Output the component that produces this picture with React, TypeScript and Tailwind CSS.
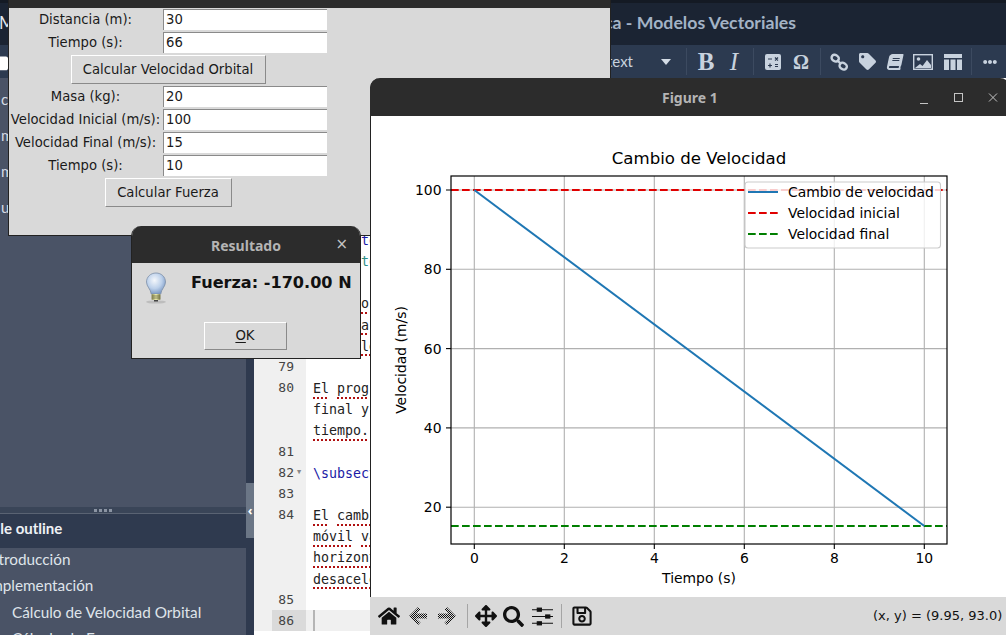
import { FaBook, FaEllipsisH, FaFolder, FaHome, FaArrowsAlt, FaSearch, FaRegSave, FaTag } from "react-icons/fa";

const DEJAVU = "font-['DejaVu_Sans',sans-serif]";
const MONO = "font-['DejaVu_Sans_Mono',monospace]";
const LATO = "font-['Lato',sans-serif]";
const TITLE = "font-['Noto_Sans',sans-serif]";

type EditorRow = { n?: number; text?: string; color?: string; spell?: boolean; fold?: boolean; active?: boolean };

const rows: EditorRow[] = [
  { n: 73, text: "\\item te", color: "text-[#1a1aa6]" },
  { n: 74, text: "      te", color: "text-[#2f8f86]" },
  { n: 75 },
  { n: 76, text: "Cálculo de", spell: true },
  { n: 77, text: "La masa", spell: true },
  { n: 78, text: "desacele", spell: true },
  { n: 79 },
  { n: 80, text: "El prog", spell: true },
  { text: "final y" },
  { text: "tiempo.", spell: true },
  { n: 81 },
  { n: 82, text: "\\subsection", color: "text-[#1a1aa6]", fold: true },
  { n: 83 },
  { n: 84, text: "El cambio", spell: true },
  { text: "móvil va", spell: true },
  { text: "horizontal", spell: true },
  { text: "desacele", spell: true },
  { n: 85 },
  { n: 86, active: true },
];

function Entry({ label, value }: { label: string; value: string }) {
  return (
    <div className="flex h-[21px] items-center">
      <div className="mr-[1px] w-[153px] text-center">{label}</div>
      <div className="flex h-[21px] w-[164px] items-center border-l border-t border-l-[#8a8a8a] border-t-[#8a8a8a] bg-white pl-[2px]">
        {value}
      </div>
    </div>
  );
}

function TkButton({ label, width }: { label: string; width: string }) {
  return (
    <div
      className={`flex h-[29px] items-center justify-center border border-b-[#8a8a8a] border-l-white border-r-[#8a8a8a] border-t-white bg-[#d9d9d9] ${width}`}
    >
      {label}
    </div>
  );
}

function ToolSlot({ children }: { children: React.ReactNode }) {
  return <div className="flex h-full w-[28px] shrink-0 items-center justify-center">{children}</div>;
}

function Sep({ className = "" }: { className?: string }) {
  return <div className={`h-[27px] w-px shrink-0 bg-[#3c4a60] ${className}`} />;
}

// spell-check squiggle goes under each word on its own, not under the spaces
function SpellText({ text }: { text: string }) {
  return (
    <>
      {text.split(" ").map((word, i) => (
        <span key={i}>
          {i > 0 && " "}
          <span className="underline decoration-[#b01010] decoration-dotted decoration-[1.5px] underline-offset-[4px]">{word}</span>
        </span>
      ))}
    </>
  );
}

function Chart() {
  const xs = [0, 2, 4, 6, 8, 10];
  const ys = [100, 80, 60, 40, 20];
  const px = (v: number) => 474.3 + v * 45;
  const py = (v: number) => 190 + (100 - v) * 3.965;
  return (
    <svg viewBox="370 116 636 481" className="h-[481px] w-[636px] shrink-0" fontFamily="'DejaVu Sans', sans-serif">
      {xs.map((v) => (
        <g key={v}>
          <line x1={px(v)} x2={px(v)} y1={176} y2={544} stroke="#b0b0b0" strokeWidth="1.1" />
          <line x1={px(v)} x2={px(v)} y1={544} y2={549} stroke="#000" strokeWidth="1.1" />
          <text x={px(v)} y={563} textAnchor="middle" fontSize="13.9" fill="#000">
            {v}
          </text>
        </g>
      ))}
      {ys.map((v) => (
        <g key={v}>
          <line x1={451} x2={947} y1={py(v)} y2={py(v)} stroke="#b0b0b0" strokeWidth="1.1" />
          <line x1={446} x2={451} y1={py(v)} y2={py(v)} stroke="#000" strokeWidth="1.1" />
          <text x={441.5} y={py(v) + 5} textAnchor="end" fontSize="13.9" fill="#000">
            {v}
          </text>
        </g>
      ))}
      <line x1={451} x2={947} y1={190} y2={190} stroke="#e00000" strokeWidth="2" strokeDasharray="7.7 3.3" />
      <line x1={451} x2={947} y1={526} y2={526} stroke="#007f00" strokeWidth="2" strokeDasharray="7.7 3.3" />
      <line x1={474.3} y1={190} x2={924.3} y2={526} stroke="#1f77b4" strokeWidth="2" />
      <rect x={451} y={176} width={496} height={368} fill="none" stroke="#000" strokeWidth="1.2" />
      <rect x={745} y={182} width={195.5} height={66} rx={3} fill="#fff" fillOpacity="0.8" stroke="#ccc" strokeWidth="1.1" />
      <line x1={748} x2={778} y1={192} y2={192} stroke="#1f77b4" strokeWidth="2" />
      <line x1={748} x2={778} y1={213} y2={213} stroke="#e00000" strokeWidth="2" strokeDasharray="7.7 3.3" />
      <line x1={748} x2={778} y1={234} y2={234} stroke="#007f00" strokeWidth="2" strokeDasharray="7.7 3.3" />
      <text x={788} y={197} fontSize="13.9" fill="#000">Cambio de velocidad</text>
      <text x={788} y={218} fontSize="13.9" fill="#000">Velocidad inicial</text>
      <text x={788} y={239} fontSize="13.9" fill="#000">Velocidad final</text>
      <text x={699} y={164} textAnchor="middle" fontSize="16.6" fill="#000">Cambio de Velocidad</text>
      <text x={699} y={583} textAnchor="middle" fontSize="13.9" fill="#000">Tiempo (s)</text>
      <text x={0} y={0} textAnchor="middle" fontSize="13.9" fill="#000" transform="translate(406 360) rotate(-90)">
        Velocidad (m/s)
      </text>
    </svg>
  );
}

function DitherArrow({ flip }: { flip?: boolean }) {
  return (
    <svg viewBox="0 0 24 24" className={`h-[24px] w-[24px] ${flip ? "-scale-x-100" : ""}`}>
      <defs>
        <pattern id={flip ? "ditherR" : "ditherL"} width="2" height="2" patternUnits="userSpaceOnUse">
          <rect width="1" height="1" fill="#111" />
          <rect x="1" y="1" width="1" height="1" fill="#111" />
        </pattern>
      </defs>
      <path
        d="M3 12 12 3l2.500 2.500L10 9.500h11v5H10l4.500 4L12 21z"
        fill={`url(#${flip ? "ditherR" : "ditherL"})`}
      />
    </svg>
  );
}

export default function App() {
  return (
    <div className="relative h-[635px] w-[1006px] overflow-hidden bg-white">
      {/* Overleaf behind the windows */}
      <div className={`flex h-[45px] items-center border-t-[3px] border-t-[#141a24] bg-[#1b2433] pb-[2px] ${LATO}`}>
        <span className="-ml-[1px] w-[36px] shrink-0 overflow-hidden text-[17px] text-[#e4e8ee]">Menu</span>
        <div className="w-[761px] shrink-0 whitespace-nowrap text-right text-[17.700px] font-bold text-[#a3b3c6]">
          Física - Modelos Vectoriales
        </div>
      </div>
      <div className={`flex h-[33px] items-center bg-[#2c3a50] text-[#c8d2de] ${LATO}`}>
        <FaFolder className="-ml-[14px] mr-[-8px] h-[22px] w-[22px] shrink-0 text-white" />
        <div className="w-[633px] shrink-0 text-right text-[15px]">Normal text</div>
        <svg viewBox="0 0 10 6" className="ml-[28px] mr-[15px] h-[6px] w-[10px] shrink-0 fill-[#d4dce6]">
          <path d="M0 0h10L5 6z" />
        </svg>
        <Sep />
        <div className="w-[5px] shrink-0" />
        <ToolSlot>
          <span className="font-['Liberation_Serif',serif] text-[25px] font-bold">B</span>
        </ToolSlot>
        <ToolSlot>
          <span className="font-['Liberation_Serif',serif] text-[25px] italic">I</span>
        </ToolSlot>
        <Sep className="ml-[5px] mr-[5px]" />
        <ToolSlot>
          <svg viewBox="0 0 16 16" className="h-[16px] w-[16px]">
            <rect width="16" height="16" rx="2" fill="#c8d2de" />
            <path d="M3 5h4M10 3.500l3 3M13 3.500l-3 3M3 11.500h4M5 9.500v4M10 10.500h3M10 12.500h3" stroke="#2c3a50" strokeWidth="1.2" />
          </svg>
        </ToolSlot>
        <ToolSlot>
          <span className="font-['Liberation_Serif',serif] text-[20px] font-bold">Ω</span>
        </ToolSlot>
        <Sep className="ml-[5px] mr-[4px]" />
        <ToolSlot>
          <svg viewBox="0 0 18 18" className="h-[18px] w-[18px] fill-none stroke-[#c8d2de]" strokeWidth="2.4">
            <rect x="1.500" y="2" width="7.500" height="6" rx="3" transform="rotate(35 5 5)" />
            <rect x="9.500" y="10" width="7.500" height="6" rx="3" transform="rotate(35 13 13)" />
            <path d="M7 7l4 4" />
          </svg>
        </ToolSlot>
        <ToolSlot>
          <FaTag className="text-[17px]" />
        </ToolSlot>
        <ToolSlot>
          <FaBook className="-skew-x-12 text-[16px]" />
        </ToolSlot>
        <ToolSlot>
          <svg viewBox="0 0 20 16" className="h-[16px] w-[20px]">
            <rect x="0.700" y="0.700" width="18.600" height="14.600" fill="none" stroke="#c8d2de" strokeWidth="1.4" />
            <circle cx="5.500" cy="5" r="1.800" fill="#c8d2de" />
            <path d="M2 14l5-4 2.500 2 4.500-6 4 5v3z" fill="#c8d2de" />
          </svg>
        </ToolSlot>
        <div className="ml-[2px]" />
        <ToolSlot>
          <svg viewBox="0 0 18 16" className="h-[16px] w-[18px] fill-[#c8d2de]">
            <path d="M0 0h18v4H0zM0 5.500h5V16H0zM6.500 5.500h5V16h-5zM13 5.500h5V16h-5z" />
          </svg>
        </ToolSlot>
        <Sep className="ml-[4px] mr-[4px]" />
        <ToolSlot>
          <FaEllipsisH className="text-[14px]" />
        </ToolSlot>
      </div>

      <div className="flex h-[557px] overflow-hidden">
        {/* File tree and outline */}
        <aside className={`flex w-[246px] shrink-0 flex-col overflow-hidden bg-[#4a5366] ${LATO}`}>
          <div className="flex h-[429px] shrink-0 flex-col pl-[1px] pt-[3px] text-[15px] text-[#d5dbe4]">
            {["codigo.py", "main.tex", "modelos.tex", "ui.py"].map((f) => (
              <div key={f} className="flex h-[36px] items-center">
                {f}
              </div>
            ))}
          </div>
          <div className="flex h-[7px] shrink-0 items-center justify-center gap-[2px] border-b border-[#5a6373] bg-[#3a4558] pr-[41px]">
            {[0, 1, 2, 3].map((i) => (
              <span key={i} className="h-[3px] w-[3px] bg-[#8b94a3]" />
            ))}
          </div>
          <div className="-ml-[12px] flex h-[34px] shrink-0 items-center bg-[#2f3a4f] pb-[6px] text-[15px] font-bold text-[#eef1f5]">
            File outline
          </div>
          <div className="-mt-[2px] flex flex-col text-[15.300px] text-[#dfe4ea]">
            <div className="-ml-[14px] flex h-[26.400px] shrink-0 items-center">Introducción</div>
            <div className="-ml-[14px] flex h-[26.400px] shrink-0 items-center">Implementación</div>
            <div className="ml-[12px] flex h-[26.400px] shrink-0 items-center">Cálculo de Velocidad Orbital</div>
            <div className="ml-[12px] flex h-[26.400px] shrink-0 items-center">Cálculo de Fuerza</div>
          </div>
        </aside>

        <div className="flex w-[8px] shrink-0 flex-col bg-[#2f3a4f] pt-[405px]">
          <div className="flex h-[55px] items-center justify-center bg-[#6b7686] text-[13px] font-bold leading-none text-white">
            ‹
          </div>
        </div>

        {/* Editor */}
        <div className={`flex-1 bg-white pt-[151.400px] text-[13.300px] text-[#222] ${MONO}`}>
          {rows.map((r, i) => (
            <div key={i} className={`flex h-[21.170px] items-center ${r.active ? "bg-[#f0f0f0]" : ""}`}>
              <div className="flex h-full w-[52px] shrink-0 bg-[#f0f0f0]">
                <div className={`ml-[18px] flex h-full w-[34px] items-center text-[13px] text-[#444] ${r.active ? "bg-[#dadada]" : ""}`}>
                  <span className="w-[22px] text-right">{r.n ?? ""}</span>
                  {r.fold && <span className="ml-[3px] text-[7px] text-[#888]">▼</span>}
                </div>
              </div>
              {r.active && <div className="ml-[7px] h-full w-[2px] bg-[#b5b5b5]" />}
              {r.text && (
                <span className={`ml-[7px] mt-[2px] whitespace-pre ${r.color ?? ""}`}>
                  {r.spell ? <SpellText text={r.text} /> : r.text}
                </span>
              )}
            </div>
          ))}
        </div>
      </div>

      {/* Tk calculator window */}
      <div
        className={`absolute left-[8px] top-[-30px] flex h-[266px] w-[603px] flex-col border border-[#222] bg-[#d9d9d9] text-[13.200px] text-[#1a1a1a] ${DEJAVU}`}
      >
        <div className="h-[37px] shrink-0 bg-[#2c2c2c]" />
        <div className="flex w-[318px] flex-col items-center gap-[2px] pt-[1px]">
          <Entry label="Distancia (m):" value="30" />
          <Entry label="Tiempo (s):" value="66" />
          <TkButton label="Calcular Velocidad Orbital" width="w-[195px]" />
          <Entry label="Masa (kg):" value="20" />
          <Entry label="Velocidad Inicial (m/s):" value="100" />
          <Entry label="Velocidad Final (m/s):" value="15" />
          <Entry label="Tiempo (s):" value="10" />
          <TkButton label="Calcular Fuerza" width="w-[127px]" />
        </div>
      </div>

      {/* Result dialog */}
      <div className={`absolute left-[131px] top-[226px] flex h-[133px] w-[230px] flex-col overflow-hidden rounded-t-[10px] border border-t-0 border-[#222] bg-[#d9d9d9] ${DEJAVU}`}>
        <div className="relative flex h-[37px] shrink-0 items-center justify-center bg-[#2c2c2c] pt-[2px]">
          <span className={`text-[14px] font-bold text-[#b4b4b4] ${TITLE}`}>Resultado</span>
          <span className="absolute right-[12px] top-[9px] text-[15px] leading-[18px] text-[#c4c4c4]">×</span>
        </div>
        <div className="flex h-[59px] shrink-0">
          <svg viewBox="0 0 24 32" className="ml-[12px] mt-[9px] h-[32px] w-[24px] shrink-0">
            <defs>
              <radialGradient id="bulb" cx="0.42" cy="0.35" r="0.65">
                <stop offset="0" stopColor="#f4f7fb" />
                <stop offset="0.6" stopColor="#bcd0ea" />
                <stop offset="1" stopColor="#7f9cc6" />
              </radialGradient>
              <linearGradient id="base" x1="0" x2="1" y1="0" y2="0">
                <stop offset="0" stopColor="#8a8a55" />
                <stop offset="0.5" stopColor="#f0f0b0" />
                <stop offset="1" stopColor="#7c7c4c" />
              </linearGradient>
            </defs>
            <ellipse cx="12" cy="30" rx="10" ry="1.600" fill="#bdbdbd" />
            <path
              d="M12 1C6.500 1 2.500 5 2.500 10c0 4.500 4.200 7 4.700 12h9.600c.5-5 4.700-7.500 4.700-12C21.500 5 17.500 1 12 1z"
              fill="url(#bulb)"
              stroke="#7d8fa8"
              strokeWidth="0.8"
            />
            <rect x="7.500" y="22" width="9" height="6" rx="1" fill="url(#base)" />
            <path d="M8 24h8M8 26h8" stroke="#5c5c38" strokeWidth="0.7" />
            <rect x="10" y="28" width="4" height="1.500" fill="#444" />
          </svg>
          <div className="ml-[23px] whitespace-nowrap pt-[10px] text-[16.100px] font-bold leading-[20px] text-[#111]">
            Fuerza: -170.00 N
          </div>
        </div>
        <div className="flex justify-center pr-[2px]">
          <div className="flex h-[28px] w-[83px] items-center justify-center border border-b-[#8a8a8a] border-l-white border-r-[#8a8a8a] border-t-white text-[13.300px] text-[#1a1a1a]">
            <span className="underline underline-offset-2">O</span>K
          </div>
        </div>
      </div>

      {/* Matplotlib figure */}
      <div className="absolute left-[370px] top-[78px] flex h-[560px] w-[640px] flex-col overflow-hidden rounded-t-[10px] bg-white shadow-[inset_1px_0_0_#222]">
        <div className={`relative flex h-[38px] shrink-0 items-center bg-[#2c2c2c] pt-[1px] ${TITLE}`}>
          <span className="ml-[292px] text-[14px] font-bold text-[#b4b4b4]">Figure 1</span>
          <svg viewBox="0 0 90 14" className="absolute left-[549px] top-[13px] h-[14px] w-[90px] fill-none stroke-[#c4c4c4]">
            <path d="M1 12.500h8" />
            <rect x="35.500" y="2.500" width="8" height="8" />
            <path d="M70 2.500l8 8M78 2.500l-8 8" />
          </svg>
        </div>
        <Chart />
        <div className={`flex h-[38px] shrink-0 items-center bg-[#d9d9d9] pl-[1px] text-[#111] ${DEJAVU}`}>
          <div className="flex w-[5px] shrink-0" />
          <FaHome className="mx-[2px] h-[22px] w-[22px] shrink-0 text-[#111]" />
          <div className="w-[4px] shrink-0" />
          <DitherArrow />
          <div className="w-[5px] shrink-0" />
          <DitherArrow flip />
          <div className="ml-[8px] mr-[7px] h-[24px] w-px shrink-0 bg-[#a5a5a5]" />
          <FaArrowsAlt className="h-[22px] w-[22px] shrink-0" />
          <div className="w-[6px] shrink-0" />
          <FaSearch className="h-[21px] w-[21px] shrink-0" />
          <div className="w-[8px] shrink-0" />
          <svg viewBox="0 0 20 20" className="h-[21px] w-[21px] shrink-0 fill-[#111] stroke-[#111]">
            <path d="M0 3.500h20M0 10h20M0 16.500h20" strokeWidth="1" />
            <rect x="5" y="2" width="4" height="3" />
            <rect x="13" y="8.500" width="4" height="3" />
            <rect x="5" y="15" width="4" height="3" />
          </svg>
          <div className="ml-[8px] mr-[9px] h-[24px] w-px shrink-0 bg-[#a5a5a5]" />
          <FaRegSave className="h-[22px] w-[22px] shrink-0" />
          <div className="ml-[280px] whitespace-nowrap text-[13px]">(x, y) = (9.95, 93.0)</div>
        </div>
      </div>
    </div>
  );
}
